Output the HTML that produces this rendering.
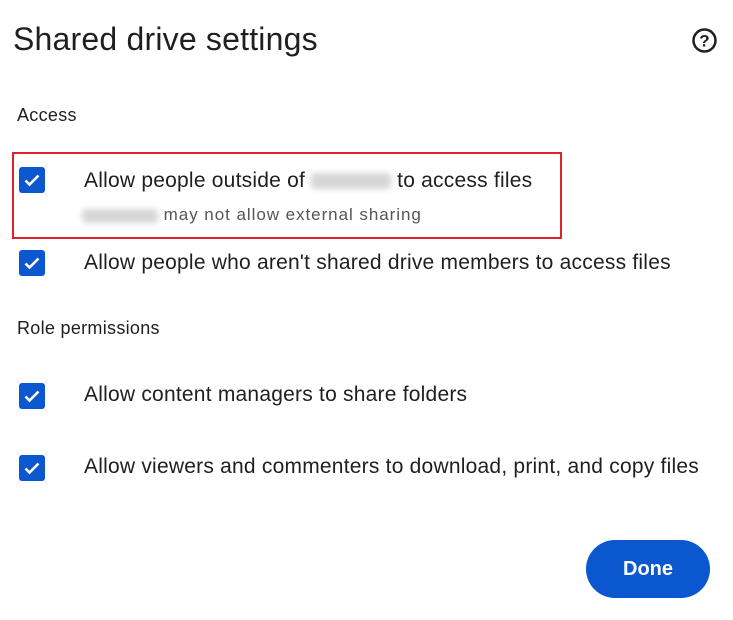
<html><head><style>
body{margin:0;width:733px;height:620px;background:#fff;font-family:"Liberation Sans",sans-serif;color:#1f1f1f;position:relative;overflow:hidden}
.a{position:absolute;white-space:nowrap}
.cb{position:absolute;left:19px;width:26px;height:26px;background:#0b57d0;border-radius:3px}
.cb svg{position:absolute;left:4px;top:4px}
.t{font-size:21px;left:84px;letter-spacing:0.22px}
.blur{display:inline-block;background:#d6d6d6;filter:blur(3px);border-radius:4px;vertical-align:middle}
</style></head><body>
<div class="a" style="left:13px;top:21px;font-size:32px;letter-spacing:0.2px">Shared drive settings</div>
<svg class="a" style="left:691px;top:27px" width="27" height="27" viewBox="0 0 27 27"><circle cx="13.5" cy="13.5" r="11" fill="none" stroke="#1f1f1f" stroke-width="2.5"/><text x="13.5" y="19.5" text-anchor="middle" font-size="17" font-weight="bold" font-family="Liberation Sans" fill="#1f1f1f">?</text></svg>
<div class="a" style="left:17px;top:105px;font-size:18px;letter-spacing:0.3px">Access</div>
<div class="a" style="left:12px;top:152px;width:546px;height:83px;border:2px solid #e0202a"></div>
<div class="cb" style="top:167px"><svg width="18" height="18" viewBox="0 0 18 18"><path d="M2.5 9.5l4 4 9-9" fill="none" stroke="#fff" stroke-width="2.6"/></svg></div>
<div class="a t" style="top:169px">Allow people outside of <span class="blur" style="width:80px;height:16px"></span> to access files</div>
<div class="a" style="left:82px;top:205px;font-size:17px;color:#555;letter-spacing:0.95px"><span class="blur" style="width:76px;height:14px"></span> may not allow external sharing</div>
<div class="cb" style="top:250px"><svg width="18" height="18" viewBox="0 0 18 18"><path d="M2.5 9.5l4 4 9-9" fill="none" stroke="#fff" stroke-width="2.6"/></svg></div>
<div class="a t" style="top:251px">Allow people who aren't shared drive members to access files</div>
<div class="a" style="left:17px;top:318px;font-size:18px;letter-spacing:0.3px">Role permissions</div>
<div class="cb" style="top:383px"><svg width="18" height="18" viewBox="0 0 18 18"><path d="M2.5 9.5l4 4 9-9" fill="none" stroke="#fff" stroke-width="2.6"/></svg></div>
<div class="a t" style="top:383px">Allow content managers to share folders</div>
<div class="cb" style="top:455px"><svg width="18" height="18" viewBox="0 0 18 18"><path d="M2.5 9.5l4 4 9-9" fill="none" stroke="#fff" stroke-width="2.6"/></svg></div>
<div class="a t" style="top:455px">Allow viewers and commenters to download, print, and copy files</div>
<div class="a" style="left:586px;top:540px;width:124px;height:58px;border-radius:29px;background:#0b57d0;color:#fff;font-size:20px;font-weight:bold;text-align:center;line-height:58px">Done</div>
</body></html>
